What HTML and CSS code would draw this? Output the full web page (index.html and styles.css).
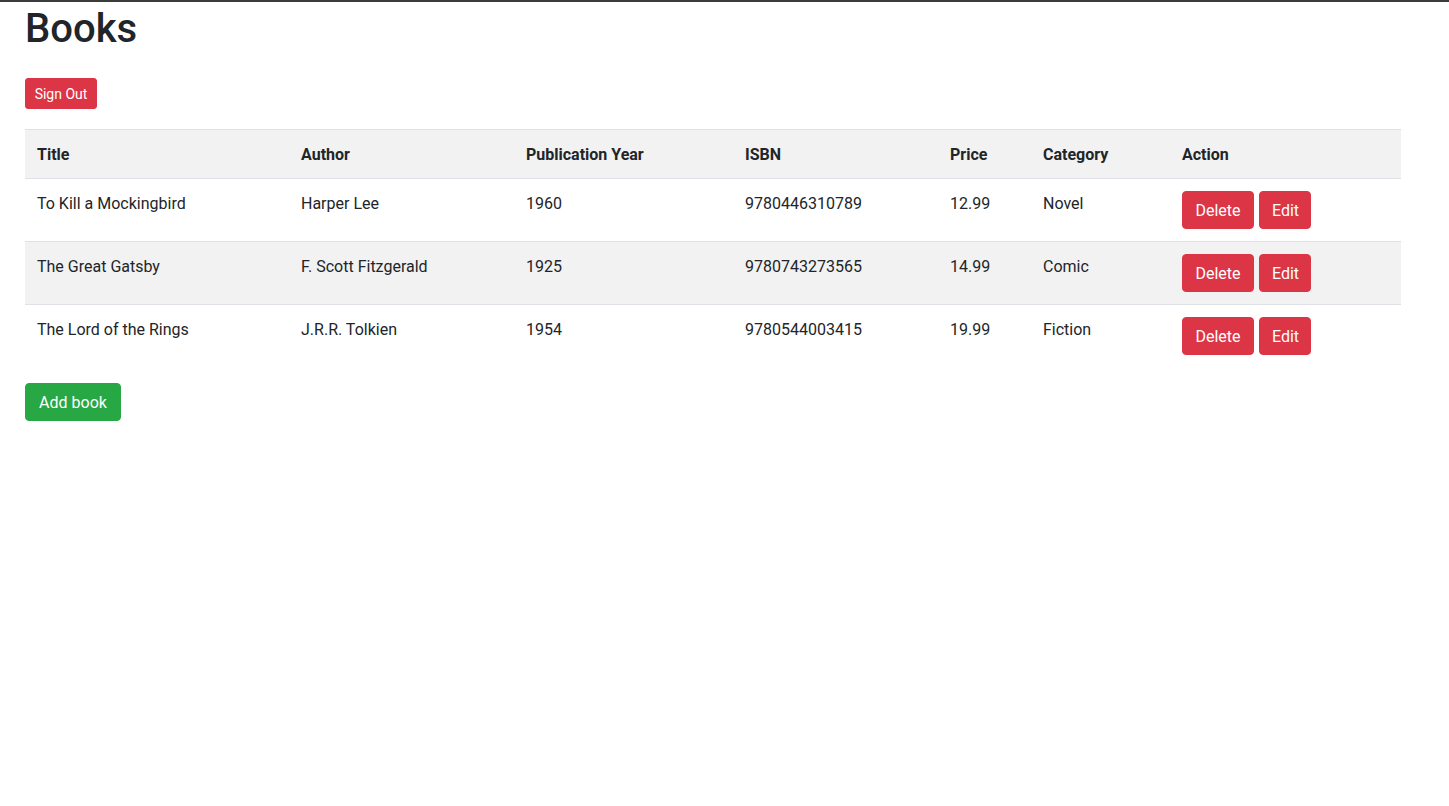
FILE: index.html
```html
<!DOCTYPE html>
<html lang="en">
<head>
<meta charset="utf-8">
<title>Books</title>
<link rel="stylesheet" href="styles.css">
</head>
<body>
<div class="topline"></div>
<main class="page">
  <h1 class="title">Books</h1>
  <button class="btn btn-danger btn-sm signout">Sign Out</button>
  <table class="books">
    <colgroup>
      <col class="c1"><col class="c2"><col class="c3"><col class="c4"><col class="c5"><col class="c6"><col class="c7">
    </colgroup>
    <tr class="head">
      <th>Title</th><th>Author</th><th>Publication Year</th><th>ISBN</th><th>Price</th><th>Category</th><th>Action</th>
    </tr>
    <tr>
      <td>To Kill a Mockingbird</td><td>Harper Lee</td><td>1960</td><td>9780446310789</td><td>12.99</td><td>Novel</td>
      <td><div class="actions"><button class="btn btn-danger del">Delete</button><button class="btn btn-danger edit">Edit</button></div></td>
    </tr>
    <tr class="alt">
      <td>The Great Gatsby</td><td>F. Scott Fitzgerald</td><td>1925</td><td>9780743273565</td><td>14.99</td><td>Comic</td>
      <td><div class="actions"><button class="btn btn-danger del">Delete</button><button class="btn btn-danger edit">Edit</button></div></td>
    </tr>
    <tr>
      <td>The Lord of the Rings</td><td>J.R.R. Tolkien</td><td>1954</td><td>9780544003415</td><td>19.99</td><td>Fiction</td>
      <td><div class="actions"><button class="btn btn-danger del">Delete</button><button class="btn btn-danger edit">Edit</button></div></td>
    </tr>
  </table>
  <button class="btn btn-success add">Add book</button>
</main>
</body>
</html>
```
FILE: styles.css
```css
html, body {
  margin: 0;
  padding: 0;
  background: #fff;
}
body {
  font-family: "Segoe UI", Roboto, "Liberation Sans", sans-serif;
  font-size: 16px;
  line-height: 1.5;
  color: #212529;
}
.topline {
  height: 2px;
  background: #3c3c3c;
}
.page {
  padding: 0 0 0 25px;
  display: flex;
  flex-direction: column;
  align-items: flex-start;
}
.title {
  margin: 0 0 25px 0;
  padding-top: 3px;
  font-size: 40px;
  font-weight: 500;
  line-height: 48px;
}
.btn {
  display: inline-block;
  font-family: inherit;
  font-weight: 400;
  font-size: 16px;
  line-height: 24px;
  padding: 7px 12px 5px;
  border: 1px solid transparent;
  border-radius: 4px;
  color: #fff;
  text-align: center;
  cursor: pointer;
}
.btn-sm {
  font-size: 14px;
  line-height: 21px;
  padding: 5px 8px 3px;
  border-radius: 3px;
}
.btn-danger {
  background: #dc3545;
  border-color: #dc3545;
}
.btn-success {
  background: #28a745;
  border-color: #28a745;
}
.signout {
  width: 72px;
  margin-bottom: 20px;
}
.books {
  width: 1376px;
  border-collapse: collapse;
  margin-bottom: 16px;
  table-layout: fixed;
}
.c1 { width: 264px; }
.c2 { width: 225px; }
.c3 { width: 219px; }
.c4 { width: 205px; }
.c5 { width: 93px; }
.c6 { width: 139px; }
.c7 { width: 231px; }
.books th, .books td {
  padding: 13px 12px 11px;
  text-align: left;
  vertical-align: top;
  border-top: 1px solid #dee2e6;
}
.books td:last-child {
  padding-top: 12px;
  padding-bottom: 12px;
}
.books th {
  font-weight: 700;
}
.head, .alt {
  background: #f2f2f2;
}
.actions {
  display: flex;
  gap: 5px;
}
.del { width: 72px; }
.edit { width: 52px; }
.add {
  width: 96px;
}
```
